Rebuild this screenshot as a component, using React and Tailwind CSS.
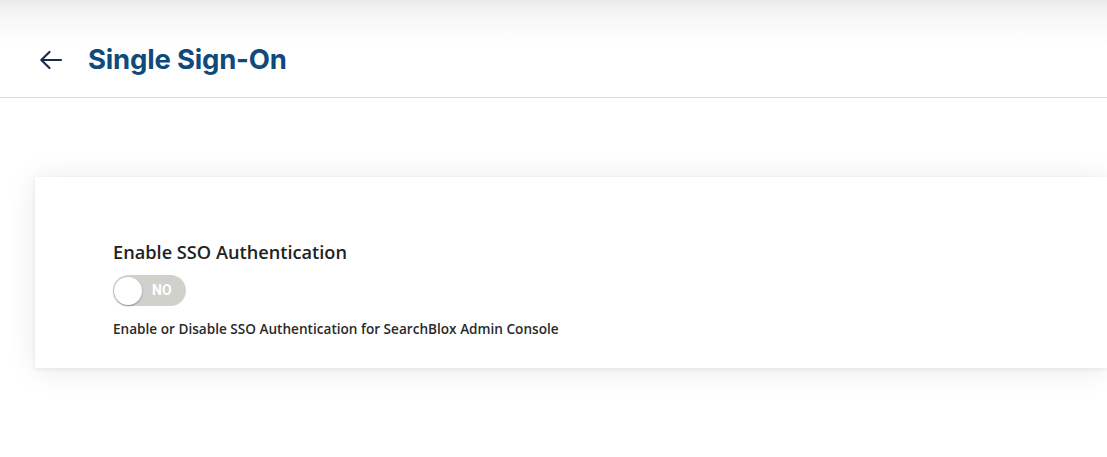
import React from "react";

export default function App() {
  return (
    <div className="w-[1107px] h-[457px] bg-white overflow-hidden relative" style={{ fontFamily: '"Open Sans", sans-serif' }}>
      <div className="h-[98px] border-b border-[#d6dde0] flex items-center pl-[39px] pt-[22px] bg-[linear-gradient(to_bottom,#e9e9e9_0px,#f5f5f5_12px,#fbfbfb_30px,#ffffff_46px)]">
        <svg width="24" height="20" viewBox="0 0 24 20">
          <path d="M22 10H2.5M10.5 2L2.3 10l8.2 8" fill="none" stroke="#1b2a4e" strokeWidth="2.2" strokeLinecap="round" strokeLinejoin="round" />
        </svg>
        <h1 className="ml-[25px] text-[27.5px] font-bold text-[#0f4a7b] tracking-[-0.2px]" style={{ fontFamily: 'Inter, sans-serif' }}>
          Single Sign-On
        </h1>
      </div>
      <div className="pt-[79px] pl-[35px]">
        <div className="bg-white h-[191px] shadow-[0_2px_28px_rgba(0,0,0,0.09),0_1px_4px_rgba(0,0,0,0.08)] pl-[78px] pt-[63px]">
          <div className="text-[18.2px] font-semibold text-[#222] leading-[24px]">Enable SSO Authentication</div>
          <div className="mt-[11px] w-[73px] h-[31px] rounded-full bg-[#d1d1cc] relative flex items-center">
            <div className="absolute left-[1px] top-[1.5px] w-[28px] h-[28px] rounded-full bg-white shadow-[0_1px_2px_rgba(0,0,0,0.35)]" />
            <span className="ml-[39px] text-[14px] font-bold text-white" style={{ fontFamily: 'Roboto, sans-serif' }}>NO</span>
          </div>
          <div className="mt-[13px] text-[13.6px] font-semibold text-[#2a2a2a]">
            Enable or Disable SSO Authentication for SearchBlox Admin Console
          </div>
        </div>
      </div>
    </div>
  );
}
